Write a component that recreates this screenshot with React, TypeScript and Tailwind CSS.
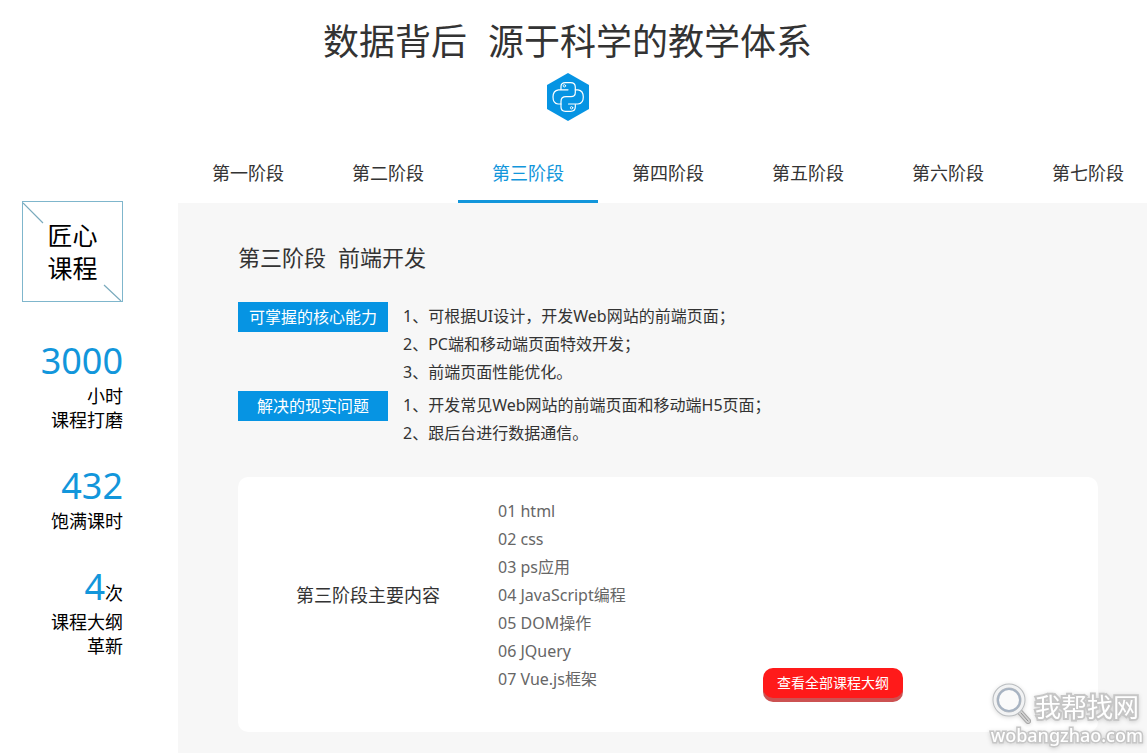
import React, { useState } from "react";

const stages = ["第一阶段", "第二阶段", "第三阶段", "第四阶段", "第五阶段", "第六阶段", "第七阶段"];

const skills = [
  {
    label: "可掌握的核心能力",
    lines: ["1、可根据UI设计，开发Web网站的前端页面；", "2、PC端和移动端页面特效开发；", "3、前端页面性能优化。"],
  },
  {
    label: "解决的现实问题",
    lines: ["1、开发常见Web网站的前端页面和移动端H5页面；", "2、跟后台进行数据通信。"],
  },
];

const topics = ["01 html", "02 css", "03 ps应用", "04 JavaScript编程", "05 DOM操作", "06 JQuery", "07 Vue.js框架"];

const stats = [
  { value: "3000", unit: "", lines: ["小时", "课程打磨"] },
  { value: "432", unit: "", lines: ["饱满课时"] },
  { value: "4", unit: "次", lines: ["课程大纲", "革新"] },
];

function PythonLogo() {
  return (
    <svg className="w-[42px] h-12" viewBox="0 0 42 48" fill="none">
      <path d="M21 0 42 12V36L21 48 0 36V12Z" fill="#0694e3" />
      <g stroke="#fff" strokeWidth="1.2" strokeLinecap="round">
        <path d="M21 16.800H11.500Q6 17.500 6 24T11 31H14" />
        <path d="M14 16.500V13.500Q14 9.600 18.500 9.600H23.500Q28.300 9.600 28.300 14V19.500Q28.300 23.700 24 23.700H19Q14 23.700 14 28.500V34Q14 38.300 18.500 38.300H23.500Q28.300 38.300 28.300 34V31.500" />
        <path d="M21.500 31H31Q36.300 30.500 36.300 24T31 16.800H28.300" />
        <circle cx="17.400" cy="12.800" r="1.200" strokeWidth="0.900" />
        <circle cx="24.600" cy="34.800" r="1.200" strokeWidth="0.900" />
      </g>
    </svg>
  );
}

function Badge() {
  return (
    <div className="relative w-[101px] h-[101px] border border-[#7fb6cc] flex items-center justify-center">
      <svg className="absolute inset-0 w-full h-full" viewBox="0 0 99 99" stroke="#7aaabd" strokeWidth="1.200">
        <path d="M0 1 20 21M81 83 98 99" />
      </svg>
      <div className="text-[25px] leading-[33px]">
        匠心
        <br />
        课程
      </div>
    </div>
  );
}

function Watermark() {
  return (
    <div className="fixed right-1 bottom-2 flex flex-col items-end text-white">
      <div className="flex items-center pr-1">
        <svg className="w-11 h-11 overflow-visible drop-shadow-sm" viewBox="0 0 44 44" fill="none">
          <path d="M28 26 37 36" stroke="#a9a9a9" strokeWidth="6" strokeLinecap="round" />
          <path d="M28 26 37 36" stroke="#d4d4d4" strokeWidth="4" strokeLinecap="round" />
          <path d="M30 28 37 36" stroke="#8f8f8f" strokeWidth="1" strokeLinecap="round" />
          <circle cx="18" cy="15" r="14" stroke="#b9bcbf" strokeWidth="5" />
          <circle cx="18" cy="15" r="14" stroke="#f2f3f4" strokeWidth="3" />
          <circle cx="18" cy="15" r="11" fill="#fafafa" stroke="#a7b3c2" strokeWidth="2" />
        </svg>
        <span className="text-[26px] leading-8 [-webkit-text-stroke:4px_#c6c6c6] [paint-order:stroke_fill] drop-shadow-sm">我帮找网</span>
      </div>
      <span className="-mt-1 text-lg leading-5 font-medium [-webkit-text-stroke:3px_#c6c6c6] [paint-order:stroke_fill] drop-shadow-sm">
        wobangzhao.com
      </span>
    </div>
  );
}

export default function App() {
  const [active, setActive] = useState(2);

  return (
    <div className="min-h-screen flex flex-col overflow-hidden bg-white text-[#333] font-['Noto_Sans','Noto_Sans_CJK_SC',sans-serif]">
      <header className="flex flex-col items-center pt-3 pr-3">
        <h1 className="flex gap-[21px] text-4xl leading-[60px]">
          <span>数据背后</span>
          <span>源于科学的教学体系</span>
        </h1>
        <div className="pt-px">
          <PythonLogo />
        </div>
      </header>

      <div className="flex-1 flex mt-6">
        <aside className="w-[178px] shrink-0 pt-14 pl-[22px] pr-[55px] text-black">
          <Badge />
          <div className="mt-9 space-y-[31px] text-right text-lg leading-6">
            {stats.map((s) => (
              <div key={s.value}>
                <div className="h-[46px] flex justify-end items-baseline">
                  <span className="text-4xl leading-[46px] text-[#1296db]">{s.value}</span>
                  {s.unit}
                </div>
                {s.lines.map((line) => (
                  <p key={line}>{line}</p>
                ))}
              </div>
            ))}
          </div>
        </aside>

        <main className="flex-1 min-w-0 flex flex-col">
          <nav className="flex overflow-hidden">
            {stages.map((name, i) => (
              <button
                key={name}
                onClick={() => setActive(i)}
                className={
                  i === active
                    ? "w-[140px] h-[58px] shrink-0 border-b-3 border-[#1296db] text-lg text-[#1296db]"
                    : "w-[140px] h-[58px] shrink-0 border-b-3 border-transparent text-lg"
                }
              >
                {name}
              </button>
            ))}
          </nav>

          <section className="flex-1 bg-[#f7f7f7] pt-[34px] pb-5 pl-[60px] pr-[49px]">
            <h2 className="flex gap-3 text-[22px] leading-10 mb-[25px]">
              <span>第三阶段</span>
              <span>前端开发</span>
            </h2>

            <div className="space-y-[5px]">
              {skills.map((s) => (
                <div key={s.label} className="flex items-start gap-[15px]">
                  <div className="w-[150px] shrink-0 bg-[#0694e3] text-white text-center leading-[30px]">{s.label}</div>
                  <div className="leading-7">
                    {s.lines.map((line) => (
                      <p key={line}>{line}</p>
                    ))}
                  </div>
                </div>
              ))}
            </div>

            <div className="mt-[30px] max-w-[860px] flex rounded-[10px] bg-white pt-5 pb-[34px]">
              <div className="flex items-center self-start">
                <h3 className="w-[260px] text-center text-lg">第三阶段主要内容</h3>
                <ul className="w-[265px] leading-7 text-[#666]">
                  {topics.map((t) => (
                    <li key={t}>{t}</li>
                  ))}
                </ul>
              </div>
              <div className="flex items-end h-[201px]">
                <button className="w-[140px] h-[30px] rounded-[10px] bg-[#ff1a1a] text-white text-sm shadow-[0_4px_0_#cc5252]">
                  查看全部课程大纲
                </button>
              </div>
            </div>
          </section>
        </main>
      </div>

      <Watermark />
    </div>
  );
}
